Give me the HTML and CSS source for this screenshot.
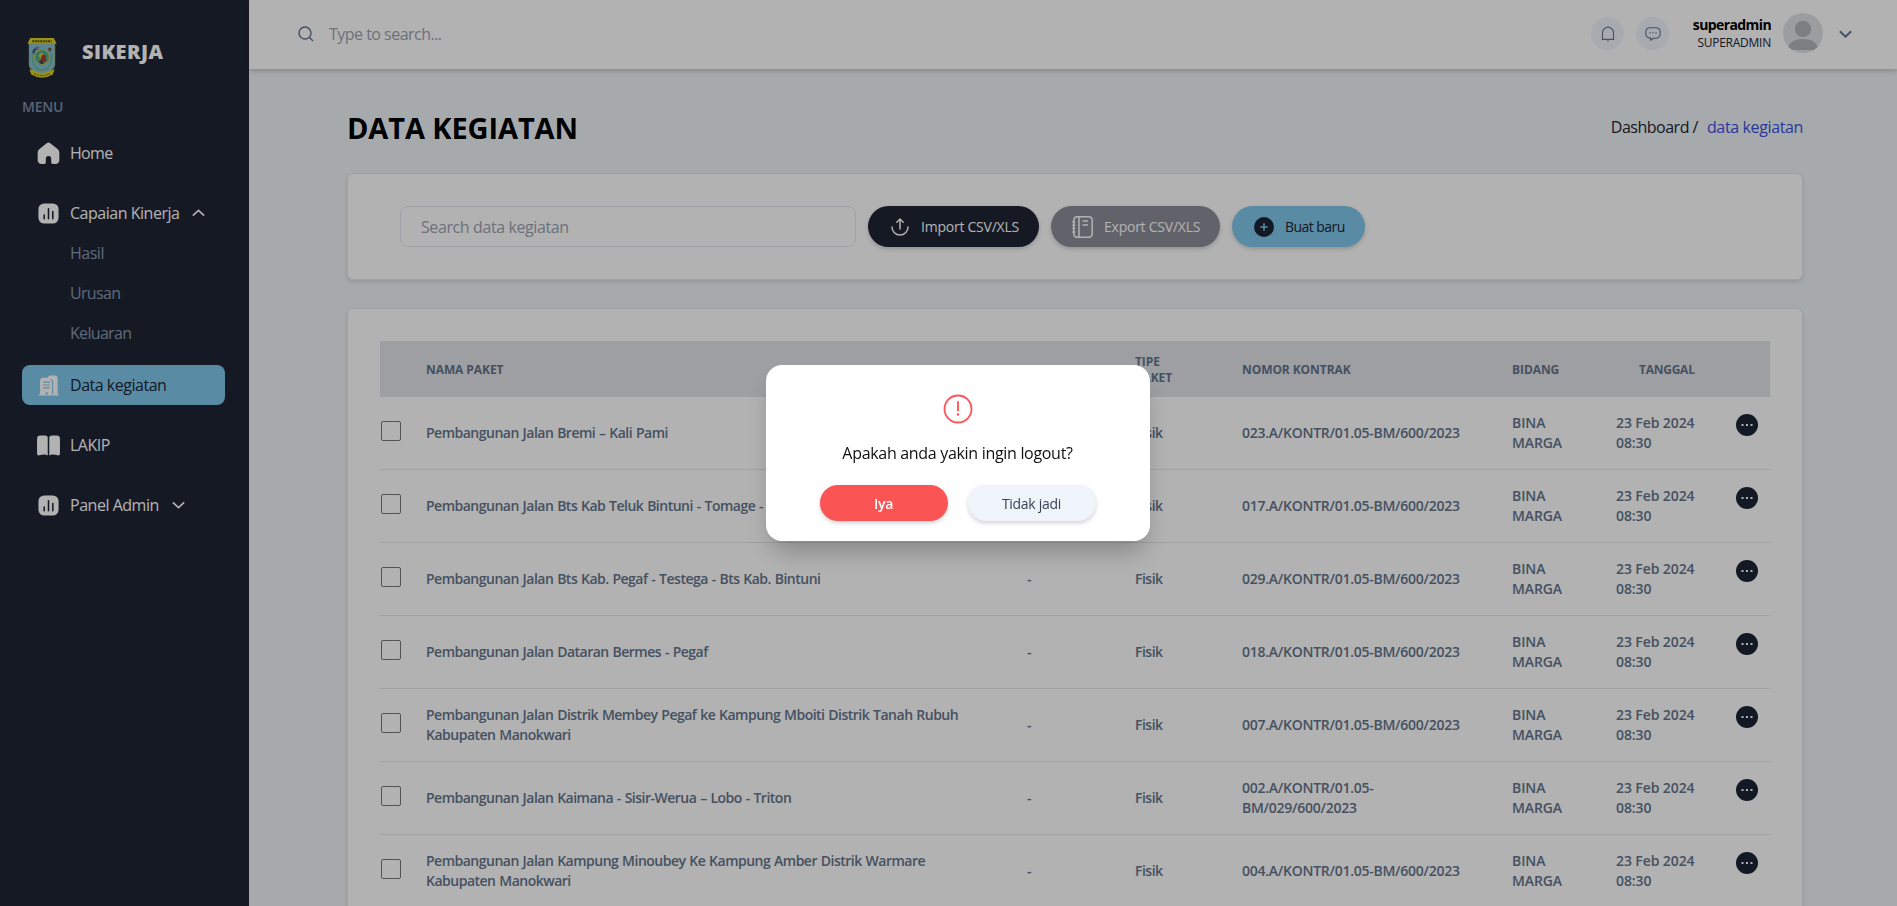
FILE: index.html
```
<!DOCTYPE html>
<html lang="id">
<head>
<meta charset="utf-8">
<title>SIKERJA</title>
<link rel="stylesheet" href="styles.css">
</head>
<body>
<div class="app">
  <aside class="sidebar">
    <div class="brand">
      <svg class="crest" viewBox="0 0 30 42"><path d="M2 7h26v21c0 5-6 8-13 12C8 36 2 33 2 28z" fill="#81c1d3" stroke="#a6bd9c"/><path d="M0 7 3 1h24l3 6z" fill="#e1d328"/><path d="M5 4.300h20" stroke="#51551c" stroke-width="2" stroke-dasharray="2 .7"/><path d="M5 17c0 13 4 17 10 17s10-4 10-17" fill="none" stroke="#72b48e" stroke-width="1.500"/><circle cx="15" cy="20.500" r="7.500" fill="#4fa98c" stroke="#b5c052" stroke-width="1.200"/><path d="M11.500 19q4-6 5 0l-3 4z" fill="#d0c542"/><path d="M15 18.500h3.500l1 6-5 3-1.500-3z" fill="#a63b33"/><path d="M13 24l4 3-2 1-3-2z" fill="#2d4b49"/><path d="M5 16q1-6 6-4l-3 2-1 4z" fill="#4b4e91"/><path d="M8 10.800h4" stroke="#d35e62" stroke-width="1.600"/><path d="m21 12 2-1.500 2 1.500-2 4z" fill="#84502c"/><path d="m2 33 4 1q9 6 18 0l4-1-2 5.500q-11 6.500-22 0z" fill="#dbd223"/><path d="M7 37.500q8 4 16 0" fill="none" stroke="#7d7928" stroke-width="1.300" stroke-dasharray="2 1"/></svg>
      <span class="brand-name">SIKERJA</span>
    </div>
    <p class="menu-label">MENU</p>
    <nav class="menu">
      <a class="item"><svg class="icon" viewBox="0 0 24 24"><path fill="#fff" d="M10.100 1.200a3 3 0 0 1 3.800 0l7.500 6A4.500 4.500 0 0 1 23.300 11v7.500a4 4 0 0 1-4 4.500h-3a1.500 1.500 0 0 1-1.500-1.500v-4a2.600 2.600 0 0 0-5.600 0v4A1.500 1.500 0 0 1 7.700 23h-3a4 4 0 0 1-4-4.500V11a4.500 4.500 0 0 1 1.900-3.800z"/></svg><span class="tight">Home</span></a>
      <a class="item open"><svg class="icon" viewBox="0 0 24 24"><rect x="1.500" y="1.500" width="21" height="21" rx="6" fill="#fff"/><path d="M7.500 13.500v4M12 7v10.500M16.500 10v7.500" stroke="#1c2434" stroke-width="1.600" stroke-linecap="round"/></svg><span>Capaian Kinerja</span><svg class="chev" viewBox="0 0 12 7"><path d="m.8 6 5.200-5 5.200 5"/></svg></a>
      <a class="sub">Hasil</a>
      <a class="sub tight">Urusan</a>
      <a class="sub tight">Keluaran</a>
      <a class="item active"><svg class="icon" viewBox="0 0 24 24"><path fill="#fff" d="M2 21h1.200V7.500Q3.200 4 6.500 4H11q1-2.500 3.500-2.500h4Q21.500 1.500 21.500 5v16h1v1.500H2z"/><path d="M14.300 5.500q2 .5 2 3V21M6.500 8.500h7M6.500 11.500h7M6.500 14.500h7" fill="none" stroke="#80c8ec" stroke-width="1.200"/><path d="M9 19h2v2.500H9z" fill="#80c8ec"/></svg><span>Data kegiatan</span></a>
      <a class="item"><svg class="icon book" viewBox="0 0 24 22"><path fill="#fff" d="M3.500.5h5Q11.200.5 11.200 2.500V21.500q-1.500-1-3.500-1-3 0-5.200.8-2.500.5-2.500-2V4Q0 .5 3.500.5zM20.500.5h-5q-2.700 0-2.700 2v19q1.500-1 3.500-1 3 0 5.200.8 2.500.5 2.500-2V4q0-3.500-3.500-3.500z"/></svg><span>LAKIP</span></a>
      <a class="item"><svg class="icon" viewBox="0 0 24 24"><rect x="1.500" y="1.500" width="21" height="21" rx="6" fill="#fff"/><path d="M7.500 13.500v4M12 7v10.500M16.500 10v7.500" stroke="#1c2434" stroke-width="1.600" stroke-linecap="round"/></svg><span>Panel Admin</span><svg class="chev" viewBox="0 0 12 7"><path d="m.8 1 5.200 5 5.200-5"/></svg></a>
    </nav>
  </aside>
  <div class="content">
    <header class="topbar">
      <svg class="search-icon" viewBox="0 0 16 16"><circle cx="7" cy="7" r="6"/><path d="m11.500 11.500 3.500 3.500"/></svg>
      <span class="search-text">Type to search...</span>
      <div class="round bell"><svg viewBox="0 0 14 16"><path d="M1.500 13.200V7a5.500 5.700 0 0 1 11 0v6.200zM.8 13.500h12.400M7 .3v1.300M7 13.500v1.700"/></svg></div>
      <div class="round"><svg viewBox="0 0 16 14"><path d="M8.500 11.300 5.700 13.200v-2.100H5a4.400 4.400 0 0 1-4.200-4.700V5A4.400 4.400 0 0 1 5 .8h6A4.400 4.400 0 0 1 15.200 5v1.400a4.600 4.600 0 0 1-4.500 4.900z"/><path d="M4.500 5.800h1M7.500 5.800h1M10.500 5.800h1" stroke-width="1.400"/></svg></div>
      <div class="user"><b>superadmin</b><span>SUPERADMIN</span></div>
      <svg class="avatar" viewBox="0 0 40 40"><defs><clipPath id="face"><circle cx="20" cy="20" r="20"/></clipPath></defs><g clip-path="url(#face)"><path d="M0 0h40v40H0z" fill="#dfe3e5"/><circle cx="20" cy="16" r="8.200" fill="#b1b7b9"/><path d="M4 37c2-8 8-11 16-11s14 3 16 11z" fill="#b1b7b9"/></g></svg>
      <svg class="chev user-chev" viewBox="0 0 12 7"><path d="m.8 1 5.200 5 5.200-5"/></svg>
    </header>
    <main class="main">
      <div class="heading"><h1>DATA KEGIATAN</h1><div class="crumbs"><span class="crumb-home">Dashboard /</span><span class="crumb-now">data kegiatan</span></div></div>
      <section class="card tools">
        <div class="field"><span>Search data kegiatan</span></div>
        <button class="btn dark"><svg width="18" height="18" viewBox="0 0 18 18"><path d="M1 9a8 8 0 0 0 16 0M9 11V1.200M5.800 4.200 9 1l3.200 3.200" fill="none" stroke="#fff" stroke-width="1.500" stroke-linecap="round" stroke-linejoin="round"/></svg><span>Import CSV/XLS</span></button>
        <button class="btn grey"><svg width="21" height="22" viewBox="0 0 21 22"><path d="M5.500.8h11q3.700 0 3.700 3.700v13q0 3.700-3.700 3.700h-11q-3.700 0-3.700-3.700v-13Q1.800.8 5.500.8zM7 .8v20.400M10.500 5h5.500M10.500 9h5.500M.3 6h3M.3 9.300h3M.3 12.600h3M.3 16h3" fill="none" stroke="#fff" stroke-width="1.500"/></svg><span>Export CSV/XLS</span></button>
        <button class="btn blue"><svg width="20" height="20" viewBox="0 0 20 20"><circle cx="10" cy="10" r="10" fill="#1c2434"/><path d="M10 6.300v7.400M6.300 10h7.400" stroke="#80c8ec" stroke-width="1.500"/></svg><span>Buat baru</span></button>
      </section>
      <section class="card listing">
        <div class="row head"><span></span><span>NAMA PAKET</span><span></span><span>TIPE<br>PAKET</span><span>NOMOR KONTRAK</span><span>BIDANG</span><span class="th-date">TANGGAL</span><span></span></div>
        <div id="rows"></div>
      </section>
    </main>
  </div>
</div>
<div class="overlay">
  <div class="modal">
    <svg class="warn" viewBox="0 0 30 30"><circle cx="15" cy="15" r="13.500" fill="none" stroke="#fb5454" stroke-width="1.800"/><path d="M15 8v8.500" stroke="#fb5454" stroke-width="1.900" stroke-linecap="round"/><circle cx="15" cy="20.500" r="1.300" fill="#fb5454"/></svg>
    <p>Apakah anda yakin ingin logout?</p>
    <div class="choices"><button class="yes">Iya</button><button class="no">Tidak jadi</button></div>
  </div>
</div>
<script src="rows.js"></script>
</body>
</html>
```
FILE: styles.css
```
* { box-sizing: border-box; }
body { margin: 0; height: 906px; overflow: hidden; font-family: "Open Sans", "Noto Sans", sans-serif; font-size: 16px; background: #eff4f8; }
.app { display: flex; height: 906px; overflow: hidden; }
.sidebar { width: 249px; flex: none; background: #1e2434; color: #fff; }
.brand { display: flex; align-items: center; height: 40px; margin: 37px 0 0 27px; }
.crest { width: 30px; height: 41px; }
.brand-name { margin: -12px 0 0 25px; font-size: 20px; font-weight: 800; letter-spacing: .45px; }
.menu-label { margin: 20px 0 0 22px; font-size: 14px; line-height: 20px; font-weight: 600; color: #7f8fa6; letter-spacing: -.2px; }
.menu { padding: 16px 24px 0 22px; display: flex; flex-direction: column; letter-spacing: -.48px; }
.menu .tight { letter-spacing: -.68px; }
.item { display: flex; align-items: center; height: 40px; margin-bottom: 20px; padding-left: 15px; border-radius: 8px; }
.item.open { margin-bottom: 0; }
.item .icon { width: 23px; height: 23px; margin-right: 10px; flex: none; }
.item .icon.book { height: 21px; }
.sub { height: 40px; line-height: 40px; padding-left: 48px; color: #8a99af; }
.item.active { margin-top: 12px; background: #80c8ec; color: #1c2434; }
.chev { width: 13px; height: 8px; margin-left: 13px; fill: none; stroke: #fff; stroke-width: 1.5; }
.content { flex: 1; min-width: 0; }
.topbar { height: 69px; background: #fff; box-shadow: 0 2px 5px rgba(0,0,0,.2); display: flex; align-items: center; padding: 0 44px 2px 49px; }
.search-icon { width: 16px; height: 16px; fill: none; stroke: #64748b; stroke-width: 1.4; }
.search-text { margin-left: 15px; margin-right: auto; color: #9ca3af; letter-spacing: -.52px; }
.round { width: 33px; height: 33px; border-radius: 50%; background: #eff4fb; display: grid; place-items: center; margin-right: 12px; }
.round svg { width: 16px; height: 14px; fill: none; stroke: #64748b; stroke-width: 1.1; }
.round.bell svg { width: 14px; height: 16px; }
.user { width: 90px; text-align: right; display: flex; flex-direction: column; margin-right: 12px; white-space: nowrap; align-items: flex-end; }
.user b { font-size: 14px; line-height: 18px; letter-spacing: -.6px; }
.user span { font-size: 12px; line-height: 18px; letter-spacing: -.25px; color: #1c2434; }
.avatar { width: 40px; height: 40px; margin-top: -2px; }
.user-chev { margin-left: 16px; margin-right: 1px; stroke: #64748b; stroke-width: 1.8; }
.main { padding: 38px 94px 0 98px; }
.heading { display: flex; justify-content: space-between; align-items: center; height: 40px; }
h1 { margin: 0; font-size: 29px; font-weight: 700; white-space: nowrap; letter-spacing: -.1px; }
.crumbs { display: flex; gap: 9px; color: #1c2434; letter-spacing: -.37px; }
.crumb-home { letter-spacing: -.5px; }
.crumb-now { color: #3c50e0; }
.card { background: #fff; border: 1px solid #e2e8f0; border-radius: 6px; box-shadow: 0 2px 4px rgba(0,0,0,.12); }
.tools { margin-top: 26px; height: 107px; padding: 32px 52px; display: flex; gap: 12px; }
.field { width: 456px; height: 41px; border: 1px solid #e2e8f0; border-radius: 8px; padding-left: 20px; line-height: 41px; color: #9ca3af; letter-spacing: -.4px; }
.btn { height: 41px; border: 0; border-radius: 21px; display: flex; align-items: center; gap: 12px; padding: 0 0 0 22px; font: 500 14px "Open Sans", sans-serif; letter-spacing: -.24px; color: #fff; white-space: nowrap; box-shadow: 0 2px 4px rgba(0,0,0,.18); }
.dark { width: 171px; background: #1e2434; padding-left: 23px; }
.grey { width: 169px; background: #8b8d99; padding-left: 21px; gap: 11px; }
.btn.blue { width: 133px; background: #80c8ec; color: #1c2434; font-weight: 400; letter-spacing: -.55px; gap: 11px; }
.listing { margin-top: 28px; height: 700px; padding: 32px 32px; }
.row { display: grid; grid-template-columns: 46px 601px 108px 107px 270px 104px 120px 1fr; height: 73px; align-items: center; justify-items: start; border-bottom: 1px solid #e4e5ea; font-size: 14px; line-height: 20px; font-weight: 600; color: #64748b; white-space: nowrap; letter-spacing: -.1px; }
.row.head { height: 56px; border: 0; padding-top: 2px; background: #e3e4ea; font-size: 12px; line-height: 16px; font-weight: 700; letter-spacing: -.08px; }
.name { letter-spacing: -.5px; word-spacing: .65px; }
.contract { letter-spacing: -.26px; }
.type { letter-spacing: -.5px; }
.head .th-date { padding-left: 23px; letter-spacing: -.25px; }
.check { width: 20px; height: 20px; border: 1px solid #777; border-radius: 2px; margin: -4px 0 0 1px; }
.more { width: 22px; height: 22px; margin-top: -16px; }
.overlay { position: fixed; inset: 0; background: rgba(0,0,0,.3); display: grid; place-items: center; padding-left: 18px; }
.modal { width: 384px; height: 176px; background: #fff; border-radius: 16px; display: flex; flex-direction: column; align-items: center; padding-top: 29px; box-shadow: 0 16px 26px -6px rgba(0,0,0,.26); }
.warn { width: 30px; height: 30px; }
.modal p { margin: 17px 0 20px; line-height: 24px; color: #111; letter-spacing: -.31px; }
.choices { display: flex; gap: 20px; }
.choices button { width: 128px; height: 36px; border: 0; border-radius: 18px; font: 600 14px "Open Sans", sans-serif; letter-spacing: -.28px; box-shadow: 0 2px 4px rgba(0,0,0,.18); }
.yes { background: #fb5454; color: #fff; }
.choices .no { background: #eff4fb; color: #374151; font-weight: 400; }
```
FILE: rows.js
```
const data = [
  ["Pembangunan Jalan Bremi – Kali Pami", "023.A/KONTR/01.05-BM/600/2023"],
  ["Pembangunan Jalan Bts Kab Teluk Bintuni - Tomage -", "017.A/KONTR/01.05-BM/600/2023"],
  ["Pembangunan Jalan Bts Kab. Pegaf - Testega - Bts Kab. Bintuni", "029.A/KONTR/01.05-BM/600/2023"],
  ["Pembangunan Jalan Dataran Bermes - Pegaf", "018.A/KONTR/01.05-BM/600/2023"],
  ["Pembangunan Jalan Distrik Membey Pegaf ke Kampung Mboiti Distrik Tanah Rubuh<br>Kabupaten Manokwari", "007.A/KONTR/01.05-BM/600/2023"],
  ["Pembangunan Jalan Kaimana - Sisir-Werua – Lobo - Triton", "002.A/KONTR/01.05-<br>BM/029/600/2023"],
  ["Pembangunan Jalan Kampung Minoubey Ke Kampung Amber Distrik Warmare<br>Kabupaten Manokwari", "004.A/KONTR/01.05-BM/600/2023"]
];
document.getElementById("rows").innerHTML = data.map(([name, contract]) => `
  <div class="row"><i class="check"></i><span class="name">${name}</span><span>-</span><span class="type">Fisik</span><span class="contract">${contract}</span><span class="unit">BINA<br>MARGA</span><span class="date">23 Feb 2024<br>08:30</span><svg class="more" viewBox="0 0 22 22"><circle cx="11" cy="11" r="11" fill="#1c2434"/><path d="M5.500 10h2v2h-2zM10 10h2v2h-2zM14.500 10h2v2h-2z" fill="#fff"/></svg></div>`).join("");
```
